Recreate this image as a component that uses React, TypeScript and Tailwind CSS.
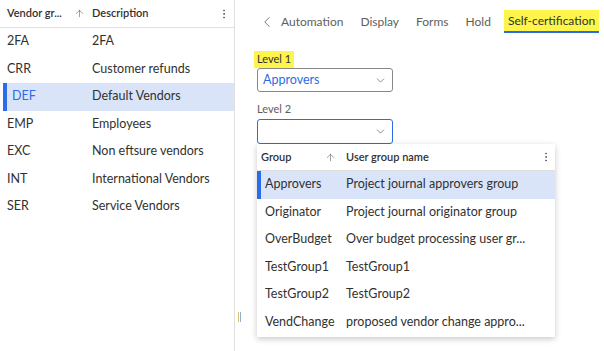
import { ChevronDown, ChevronLeft, ArrowUp, MoreVertical } from "lucide-react";

const vendors = [
  { code: "2FA", desc: "2FA" },
  { code: "CRR", desc: "Customer refunds" },
  { code: "DEF", desc: "Default Vendors", selected: true },
  { code: "EMP", desc: "Employees" },
  { code: "EXC", desc: "Non eftsure vendors" },
  { code: "INT", desc: "International Vendors" },
  { code: "SER", desc: "Service Vendors" },
];

const groups = [
  { name: "Approvers", desc: "Project journal approvers group", selected: true },
  { name: "Originator", desc: "Project journal originator group" },
  { name: "OverBudget", desc: "Over budget processing user gr..." },
  { name: "TestGroup1", desc: "TestGroup1" },
  { name: "TestGroup2", desc: "TestGroup2" },
  { name: "VendChange", desc: "proposed vendor change appro..." },
];

const tabs = ["Automation", "Display", "Forms", "Hold"];

const font = { fontFamily: 'Lato, "Liberation Sans", sans-serif' };

const App = () => (
  <div className="flex w-[604px] h-[351px] bg-white text-[#323130] overflow-hidden whitespace-nowrap" style={font}>
    {/* vendor group list */}
    <div className="w-[235px] shrink-0 border-r border-[#e1dfdd] flex flex-col">
      <div className="h-[28px] border-b border-[#e1dfdd] flex items-center text-[11px] font-semibold">
        <div className="w-[92px] pl-[7px] flex items-center">
          <span className="w-[67px]">Vendor gr...</span>
          <ArrowUp size={11} strokeWidth={1.3} className="text-[#605e5c]" />
        </div>
        <span className="flex-1">Description</span>
        <MoreVertical size={12} className="mr-[4px] text-[#605e5c]" />
      </div>
      {vendors.map((v) => (
        <div
          key={v.code}
          className={
            v.selected
              ? "h-[27.5px] flex items-center text-[12.5px] bg-[#d9e4f9] ml-[3px] border-l-[4px] border-[#2b6ce8]"
              : "h-[27.5px] flex items-center text-[12.5px]"
          }
        >
          <span className={v.selected ? "w-[85px] pl-[5px] text-[#2b6ce8]" : "w-[92px] pl-[7px]"}>{v.code}</span>
          <span>{v.desc}</span>
        </div>
      ))}
    </div>

    {/* splitter */}
    <div className="w-[8px] shrink-0 flex items-end pb-[29px] justify-center">
      <div className="flex gap-[1px] h-[10px]">
        <div className="w-[1px] bg-[#d8c27a]" />
        <div className="w-[1px] bg-[#8fb0d8]" />
      </div>
    </div>

    {/* details */}
    <div className="relative flex-1 pl-[14px]">
      <div className="mt-[10px] h-[23px] flex items-center text-[12px] text-[#605e5c]">
        <ChevronLeft size={18} strokeWidth={1.1} className="ml-[1px] mr-[5px] shrink-0" />
        <div className="flex items-center gap-[17px]">
          {tabs.map((t) => (
            <span key={t}>{t}</span>
          ))}
          <span className="ml-[-4px] h-[23px] px-[4px] flex items-center bg-[#fdf54b] text-[#323130] border-b-2 border-[#2b6ce8]">
            Self-certification
          </span>
        </div>
      </div>

      <div className="mt-[18px] ml-[-3px] w-fit h-[17px] px-[3px] flex items-center bg-[#fdf54b] text-[11px]">Level 1</div>
      <div className="w-[136px] h-[24px] border border-[#8a8886] rounded-[3px] flex items-center justify-between px-[5px]">
        <span className="text-[12.5px] text-[#2b6ce8]">Approvers</span>
        <ChevronDown size={13} strokeWidth={1.3} className="text-[#605e5c]" />
      </div>

      <div className="mt-[10px] h-[15px] flex items-center text-[11px] text-[#605e5c]">Level 2</div>
      <div className="mt-[2px] w-[136px] h-[25px] border border-[#2b6ce8] rounded-[3px] flex items-center justify-end px-[5px]">
        <ChevronDown size={13} strokeWidth={1.3} className="text-[#605e5c]" />
      </div>

      {/* lookup popup */}
      <div className="absolute left-[14px] top-[144px] w-[298px] h-[193px] bg-white shadow-[0_2px_6px_rgba(0,0,0,0.22)]">
        <div className="h-[27px] border-b border-[#e1dfdd] flex items-center text-[11px] font-semibold">
          <div className="w-[89px] pl-[4px] flex items-center justify-between pr-[10px]">
            <span>Group</span>
            <ArrowUp size={11} strokeWidth={1.3} className="text-[#605e5c]" />
          </div>
          <span className="flex-1">User group name</span>
          <MoreVertical size={12} className="mr-[3px] text-[#605e5c]" />
        </div>
        {groups.map((g) => (
          <div
            key={g.name}
            className={
              g.selected
                ? "h-[27.5px] flex items-center text-[12.5px] bg-[#d9e4f9] border-l-[4px] border-[#2b6ce8]"
                : "h-[27.5px] flex items-center text-[12.5px]"
            }
          >
            <span className={g.selected ? "w-[85px] pl-[4px]" : "w-[89px] pl-[8px]"}>{g.name}</span>
            <span>{g.desc}</span>
          </div>
        ))}
      </div>
    </div>
  </div>
);

export default App;
